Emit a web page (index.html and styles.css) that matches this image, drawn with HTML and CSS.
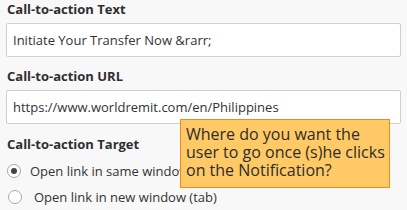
FILE: index.html
```html
<!DOCTYPE html>
<html lang="en">
<head>
<meta charset="UTF-8" />
<title>Call-to-action</title>
<link rel="stylesheet" href="styles.css">
</head>
<body>
  <div class="form">
    <label class="field-label" for="cta-text">Call-to-action Text</label>
    <input class="field-input" id="cta-text" type="text" value="Initiate Your Transfer Now &amp;rarr;">

    <label class="field-label" for="cta-url">Call-to-action URL</label>
    <input class="field-input url" id="cta-url" type="text" value="https://www.worldremit.com/en/Philippines">

    <div class="field-label">Call-to-action Target</div>
    <div class="radios">
      <label class="radio-row">
        <input type="radio" name="target" checked>
        <span>Open link in same window</span>
      </label>
      <label class="radio-row second">
        <input type="radio" name="target">
        <span>Open link in new window (tab)</span>
      </label>
    </div>

    <div class="hint">Where do you want the<br>user to go once (s)he clicks<br>on the Notification?</div>
  </div>
</body>
</html>
```

FILE: styles.css
```css
* {
  box-sizing: border-box;
}

body {
  margin: 0;
  background: #f8f8f8;
  font-family: 'Open Sans', 'Segoe UI', sans-serif;
  color: #333;
}

.form {
  position: relative;
  padding: 0 6px;
  display: flex;
  flex-direction: column;
  align-items: flex-start;
}

.field-label {
  display: block;
  font-size: 13px;
  font-weight: 700;
  color: #2f2f2f;
  line-height: 18px;
  padding-left: 1px;
  margin-bottom: 5px;
}

.field-input {
  width: 395px;
  height: 34px;
  border: 1px solid #cfcfcf;
  border-radius: 2px;
  background: #fff;
  padding: 0 6px;
  font-family: 'Open Sans', 'Segoe UI', sans-serif;
  font-size: 13px;
  color: #333;
  margin: 0 0 10px 0;
  outline: none;
}

.field-input.url {
  margin-bottom: 11px;
}

.radio-row {
  display: flex;
  align-items: center;
  height: 26px;
  font-size: 13px;
  color: #333;
  padding-left: 1px;
}

.radio-row input {
  appearance: none;
  -webkit-appearance: none;
  width: 14px;
  height: 14px;
  margin: 0 9px 0 0;
  border: 1px solid #a8a8a8;
  border-radius: 50%;
  background: #fff;
  display: grid;
  place-items: center;
}

.radio-row input:checked::after {
  content: "";
  width: 6px;
  height: 6px;
  border-radius: 50%;
  background: #444;
}

.radio-row.second input {
  margin-left: 1px;
  margin-right: 12px;
}

/* tooltip over the target options */
.hint {
  position: absolute;
  left: 180px;
  top: 119px;
  width: 210px;
  height: 69px;
  background: #ffc966;
  border: 1px solid #f28a1c;
  color: #2d2d2d;
  font-size: 16px;
  line-height: 18px;
  padding: 5px 0 0 5px;
  white-space: nowrap;
}
```
